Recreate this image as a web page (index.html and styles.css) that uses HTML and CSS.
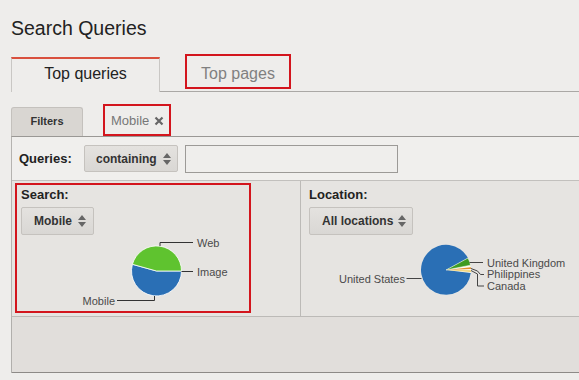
FILE: index.html
```html
<!DOCTYPE html>
<html lang="en">
<head>
    <meta charset="UTF-8">
    <title>Search Queries</title>
    <link rel="stylesheet" href="styles.css">
</head>
<body>
<div class="page">
    <h1 class="title">Search Queries</h1>

    <div class="tabs">
        <div class="tab tab-active">Top queries</div>
        <div class="tab tab-marked">Top pages</div>
    </div>

    <div class="filter-bar">
        <div class="filters-btn">Filters</div>
        <div class="chip">
            Mobile
            <svg class="chip-x" width="10" height="10" viewBox="0 0 10 10">
                <path d="M1.5 1.5 L8.5 8.5 M8.5 1.5 L1.5 8.5" stroke="#666" stroke-width="2.2"/>
            </svg>
        </div>
    </div>

    <div class="panel">
        <div class="query-row">
            <span class="row-label">Queries:</span>
            <div class="select select-containing">
                containing
                <svg class="arrows" width="8" height="12" viewBox="0 0 8 12"><path d="M0 5 L4 0 L8 5 Z M0 7 L4 12 L8 7 Z" fill="#666"/></svg>
            </div>
            <div class="text-input"></div>
        </div>

        <div class="chart-row">
            <div class="chart-col chart-left">
                <div class="chart-box">
                    <div class="chart-label">Search:</div>
                    <div class="select select-mobile">
                        Mobile
                        <svg class="arrows" width="8" height="12" viewBox="0 0 8 12"><path d="M0 5 L4 0 L8 5 Z M0 7 L4 12 L8 7 Z" fill="#666"/></svg>
                    </div>
                    <svg class="pie" width="225" height="75" viewBox="0 0 225 75">
                        <path d="M135.5 35 L160.5 35 A25 25 0 1 1 111.4 28.3 Z" fill="#2a6fb5" stroke="#fff" stroke-width="0.8"/>
                        <path d="M135.5 35 L160.5 35 A25 25 0 0 0 111.4 28.3 Z" fill="#5fc32f" stroke="#fff" stroke-width="0.8"/>
                        <g stroke="#333" stroke-width="1" fill="none">
                            <path d="M139 10 V6.5 H172"/>
                            <path d="M160.5 35.5 H172"/>
                            <path d="M96 64.5 H133.5 V60"/>
                        </g>
                        <g class="pie-text">
                            <text x="176" y="10.5">Web</text>
                            <text x="176" y="39.5">Image</text>
                            <text x="94" y="68.5" text-anchor="end">Mobile</text>
                        </g>
                    </svg>
                </div>
            </div>
            <div class="chart-col chart-right">
                <div class="chart-label">Location:</div>
                <div class="select select-location">
                    All locations
                    <svg class="arrows" width="8" height="12" viewBox="0 0 8 12"><path d="M0 5 L4 0 L8 5 Z M0 7 L4 12 L8 7 Z" fill="#666"/></svg>
                </div>
                <svg class="pie" width="270" height="75" viewBox="0 0 270 75">
                    <circle cx="137" cy="34" r="25" fill="#fdfbf2"/>
                    <path d="M137 34 L161.8 37 A25 25 0 1 1 159 22 Z" fill="#2a6fb5"/>
                    <path d="M137 34 L159 22 A25 25 0 0 1 161.5 29.2 Z" fill="#3f9b22" stroke="#fff" stroke-width="0.5"/>
                    <path d="M137 34 L161.9 31.2 A25 25 0 0 1 162 33.1 Z" fill="#e3902a"/>
                    <path d="M137 34 L162 34.2 A25 25 0 0 1 161.9 35.9 Z" fill="#f0cf6a"/>
                    <g stroke="#444" stroke-width="1" fill="none">
                        <path d="M97.5 42.5 H112.5"/>
                        <path d="M160.5 26.5 H174"/>
                        <path d="M162 32.5 L168.5 35 L171.5 38.5 H175"/>
                        <path d="M162 34.5 L168.5 38 V50 H175"/>
                    </g>
                    <g class="pie-text">
                        <text x="96" y="46.5" text-anchor="end">United States</text>
                        <text x="178" y="30.5">United Kingdom</text>
                        <text x="178" y="42">Philippines</text>
                        <text x="178" y="53.5">Canada</text>
                    </g>
                </svg>
            </div>
        </div>

        <div class="panel-footer"></div>
    </div>
</div>
</body>
</html>
```

FILE: styles.css
```css
body {
    margin: 0;
    background-color: #eeedeb;
    font-family: "Liberation Sans", Arial, sans-serif;
    color: #222;
    overflow: hidden;
}

.page {
    padding-left: 11px;
}

.title {
    margin: 16px 0 0 0;
    font-size: 19.5px;
    line-height: 24px;
    font-weight: normal;
    color: #222;
}

/* tabs */
.tabs {
    display: flex;
    align-items: flex-start;
    margin-top: 17px;
    border-bottom: 1px solid #aaa8a5;
}

.tab {
    box-sizing: border-box;
    display: flex;
    align-items: center;
    justify-content: center;
    font-size: 16px;
}

.tab-active {
    width: 149px;
    height: 35px;
    margin-bottom: -1px;
    padding-bottom: 4px;
    background-color: #eeedeb;
    border-top: 2px solid #d9503e;
    border-left: 1px solid #c9c7c4;
    border-right: 1px solid #c9c7c4;
    color: #222;
}

.tab-marked {
    width: 106px;
    height: 35px;
    margin-left: 25px;
    margin-top: -3px;
    padding-top: 4px;
    border: 2px solid #d3151d;
    color: #808080;
}

/* filter bar */
.filter-bar {
    display: flex;
    align-items: flex-end;
    margin-top: 12px;
    height: 32px;
}

.filters-btn {
    box-sizing: border-box;
    width: 72px;
    height: 29px;
    padding-bottom: 2px;
    display: flex;
    align-items: center;
    justify-content: center;
    background-color: #d9d6d2;
    border: 1px solid #c4c1bd;
    border-bottom: none;
    border-radius: 3px 3px 0 0;
    font-size: 11px;
    font-weight: bold;
    color: #333;
}

.chip {
    box-sizing: border-box;
    height: 32px;
    margin-left: 20px;
    padding: 1px 5px 0 6px;
    display: flex;
    align-items: center;
    gap: 5px;
    border: 2px solid #d3151d;
    font-size: 13px;
    color: #777;
}

/* panel */
.panel {
    border-top: 1px solid #9a9895;
    border-left: 1px solid #b5b3b0;
}

.query-row {
    display: flex;
    align-items: center;
    height: 43px;
    padding-left: 7px;
    background-color: #f0efed;
    border-bottom: 1px solid #c2c0bd;
}

.row-label {
    width: 65px;
    font-size: 13px;
    font-weight: bold;
    color: #222;
}

.select {
    box-sizing: border-box;
    height: 28px;
    display: flex;
    align-items: center;
    justify-content: space-between;
    background: linear-gradient(#e4e2df, #d9d7d4);
    border: 1px solid #c5c2be;
    border-radius: 2px;
    font-size: 12px;
    font-weight: bold;
    color: #333;
}

.select-containing {
    width: 94px;
    height: 27px;
    padding: 0 6px 0 11px;
}

.select-mobile {
    width: 73px;
    padding: 0 7px 0 12px;
}

.select-location {
    width: 104px;
    padding: 0 6px 0 12px;
}

.text-input {
    box-sizing: border-box;
    width: 213px;
    height: 28px;
    margin-left: 7px;
    background-color: #efeeec;
    border: 1px solid #9c9a97;
}

.chart-row {
    display: flex;
    height: 135px;
    background-color: #e6e4e1;
    border-bottom: 1px solid #bcbab7;
}

.chart-col {
    box-sizing: border-box;
}

.chart-left {
    width: 289px;
    padding: 2px 0 0 3px;
    border-right: 1px solid #bcbab7;
}

.chart-box {
    box-sizing: border-box;
    width: 236px;
    height: 130px;
    padding: 2px 0 0 4px;
    border: 2px solid #d3151d;
}

.chart-right {
    flex: 1;
    padding: 6px 0 0 8px;
}

.chart-label {
    font-size: 13px;
    line-height: 15px;
    font-weight: bold;
    color: #222;
    margin-bottom: 5px;
}

.pie {
    display: block;
    margin-top: 1px;
}

.pie-text {
    font-family: "Liberation Sans", Arial, sans-serif;
    font-size: 11px;
    fill: #4a4a4a;
}

.panel-footer {
    height: 55px;
    background-color: #e1dedb;
    border-bottom: 1px solid #8d8a87;
    box-shadow: 0 1px 1px rgba(0, 0, 0, 0.12);
}
```
